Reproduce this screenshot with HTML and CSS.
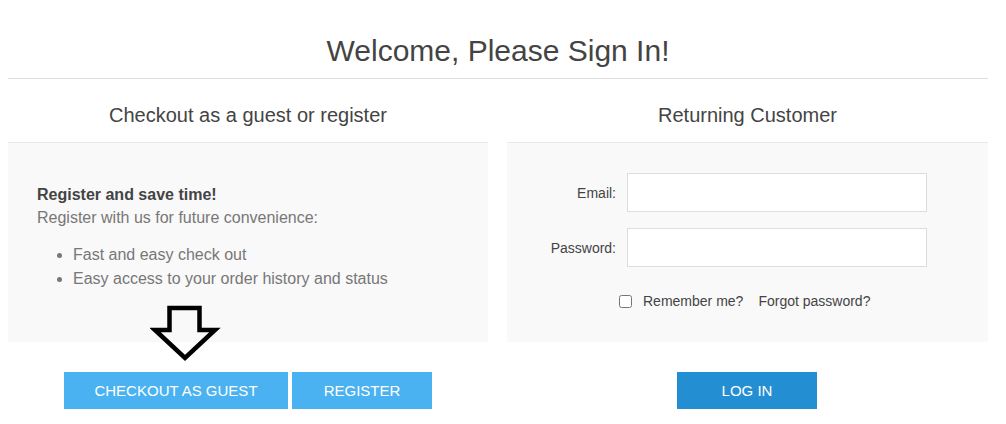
FILE: index.html
```html
<!DOCTYPE html>
<html lang="en">
<head>
    <meta charset="UTF-8">
    <title>Welcome, Please Sign In!</title>
    <link rel="stylesheet" href="styles.css">
</head>
<body>
    <div class="page">
        <div class="page-title">
            <h1>Welcome, Please Sign In!</h1>
        </div>

        <div class="columns">
            <!-- Guest / register -->
            <div class="col new-wrapper">
                <div class="col-title">Checkout as a guest or register</div>
                <div class="panel">
                    <div class="topic">
                        <strong>Register and save time!</strong>
                        <p>Register with us for future convenience:</p>
                        <ul>
                            <li>Fast and easy check out</li>
                            <li>Easy access to your order history and status</li>
                        </ul>
                    </div>
                </div>
                <div class="buttons">
                    <button class="btn btn-guest">Checkout as Guest</button>
                    <button class="btn btn-register">Register</button>
                </div>
                <svg class="arrow" width="72" height="64" viewBox="0 0 72 64">
                    <polygon points="19.5,5 49.5,5 49.5,27 65,27 35,55 5,27 19.5,27" fill="none" stroke="#000" stroke-width="4.5" stroke-linejoin="miter"/>
                </svg>
            </div>

            <!-- Returning customer -->
            <div class="col returning">
                <div class="col-title">Returning Customer</div>
                <div class="panel">
                    <form class="login-form">
                        <div class="row">
                            <label for="email">Email:</label>
                            <input type="text" id="email">
                        </div>
                        <div class="row">
                            <label for="password">Password:</label>
                            <input type="password" id="password">
                        </div>
                        <div class="remember">
                            <input type="checkbox" id="remember">
                            <label for="remember">Remember me?</label>
                            <a href="#">Forgot password?</a>
                        </div>
                    </form>
                </div>
                <div class="buttons">
                    <button class="btn btn-login">Log in</button>
                </div>
            </div>
        </div>
    </div>
</body>
</html>
```

FILE: styles.css
```css
/* Global styles */
body {
    margin: 0;
    font-family: 'Liberation Sans', Arial, sans-serif;
    color: #444;
    background: #fff;
}
.page {
    width: 980px;
    margin-left: 8px;
}
.page-title {
    border-bottom: 1px solid #ddd;
    padding: 34px 0 10px;
    text-align: center;
}
h1 {
    margin: 0;
    font-size: 30px;
    font-weight: normal;
    line-height: 34px;
}

/* Columns */
.columns {
    display: flex;
    justify-content: space-between;
}
.col {
    width: 480px;
    position: relative;
}
.col.returning {
    width: 481px;
}
.col-title {
    text-align: center;
    font-size: 20px;
    line-height: 24px;
    padding: 24px 0 15px;
    border-bottom: 1px solid #e9e9e9;
}
.panel {
    background: #f9f9f9;
    height: 199px;
}

/* Guest panel */
.topic {
    padding: 40px 29px 0;
    font-size: 16px;
    line-height: 23px;
}
.topic strong {
    display: block;
    color: #444;
}
.topic p {
    margin: 0;
    color: #777;
}
.topic ul {
    margin: 14px 0 0;
    padding-left: 36px;
    color: #777;
    line-height: 24px;
}

/* Login form */
.login-form {
    padding-top: 30px;
}
.row {
    display: flex;
    align-items: center;
    margin-bottom: 16px;
}
.row label {
    width: 109px;
    text-align: right;
    padding-right: 11px;
    font-size: 14px;
    color: #444;
}
.row input {
    width: 300px;
    height: 39px;
    box-sizing: border-box;
    border: 1px solid #ddd;
    background: #fff;
    padding: 0 8px;
    font-size: 14px;
}
.remember {
    display: flex;
    align-items: center;
    padding-left: 111px;
    margin-top: 26px;
    font-size: 14px;
}
.remember input {
    margin: 0 11px 0 1px;
    width: 13px;
    height: 13px;
}
.remember label {
    color: #444;
}
.remember a {
    margin-left: 15px;
    color: #444;
    text-decoration: none;
}

/* Buttons */
.buttons {
    display: flex;
    justify-content: center;
    gap: 4px;
    padding-top: 30px;
}
.returning .buttons {
    padding-right: 1px;
}
.btn {
    height: 37px;
    padding: 0;
    border: none;
    background: #4ab2f1;
    color: #fff;
    font-family: 'Liberation Sans', Arial, sans-serif;
    font-size: 15px;
    text-transform: uppercase;
    cursor: pointer;
}
.btn-guest {
    width: 224px;
}
.btn-register,
.btn-login {
    width: 140px;
}
.btn-login {
    background: #248ed3;
}

/* Annotation arrow */
.arrow {
    position: absolute;
    left: 142px;
    top: 224px;
}
```
